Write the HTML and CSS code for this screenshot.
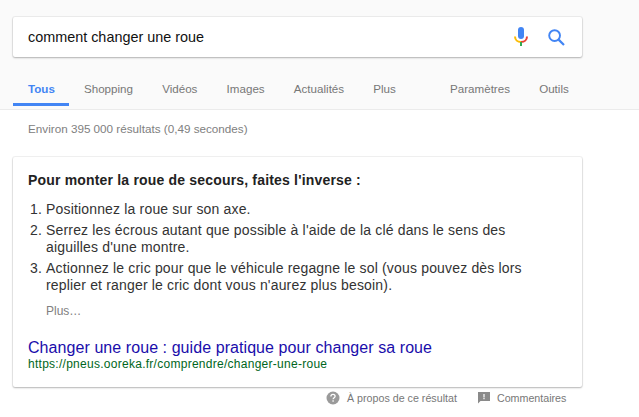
FILE: index.html
```html
<!DOCTYPE html>
<html lang="fr">
<head>
<meta charset="utf-8">
<title>comment changer une roue</title>
<link rel="stylesheet" href="styles.css">
</head>
<body>
<header class="top">
  <div class="search">
    <span class="query">comment changer une roue</span>
    <svg class="mic" width="14" height="20" viewBox="0 0 14 20">
      <rect x="4" y="0" width="6" height="12" rx="3" fill="#4285f4"/>
      <path d="M1 9.5C1 13 3.6 15 7 15" fill="none" stroke="#fbbc05" stroke-width="2"/>
      <path d="M13 9.5C13 13 10.4 15 7 15" fill="none" stroke="#ea4335" stroke-width="2"/>
      <rect x="6" y="15" width="2" height="4" fill="#34a853"/>
    </svg>
    <svg class="lens" width="17" height="17" viewBox="0 0 17 17">
      <circle cx="6.6" cy="6.6" r="5.4" fill="none" stroke="#4285f4" stroke-width="1.9"/>
      <path d="M10.6 10.6L16 16" stroke="#4285f4" stroke-width="2.2"/>
    </svg>
  </div>
  <nav class="tabs">
    <a class="tab active">Tous</a>
    <a class="tab">Shopping</a>
    <a class="tab">Vidéos</a>
    <a class="tab">Images</a>
    <a class="tab">Actualités</a>
    <a class="tab">Plus</a>
    <a class="tab tools-start">Paramètres</a>
    <a class="tab">Outils</a>
  </nav>
</header>
<main class="main">
  <p class="stats">Environ 395 000 résultats (0,49 secondes)</p>
  <section class="card">
    <h2 class="heading">Pour monter la roue de secours, faites l'inverse :</h2>
    <ol class="steps">
      <li>Positionnez la roue sur son axe.</li>
      <li>Serrez les écrous autant que possible à l'aide de la clé dans le sens des aiguilles d'une montre.</li>
      <li>Actionnez le cric pour que le véhicule regagne le sol (vous pouvez dès lors replier et ranger le cric dont vous n'aurez plus besoin).</li>
    </ol>
    <div class="more">Plus…</div>
    <a class="title">Changer une roue : guide pratique pour changer sa roue</a>
    <div class="url">https://pneus.ooreka.fr/comprendre/changer-une-roue</div>
  </section>
  <div class="feedback">
    <svg class="fb-icon" width="14" height="14" viewBox="0 0 14 14">
      <circle cx="7" cy="7" r="6.5" fill="#9a9a9a"/>
      <path d="M4.9 5.4C4.9 4.2 5.8 3.4 7 3.4S9.100 4.200 9.100 5.300C9.100 6.700 7.100 6.700 7.100 8.300" fill="none" stroke="#fff" stroke-width="1.300"/>
      <rect x="6.400" y="9.300" width="1.400" height="1.400" fill="#fff"/>
    </svg>
    <span class="fb-about">À propos de ce résultat</span>
    <svg class="fb-icon" width="12" height="12" viewBox="0 0 12 12">
      <path d="M0 0H12V9H2.500L0 11.500Z" fill="#8a8a8a"/>
      <rect x="5.400" y="2" width="1.200" height="3.500" fill="#fff"/>
      <rect x="5.400" y="6" width="1.200" height="1.200" fill="#fff"/>
    </svg>
    <span class="fb-comments">Commentaires</span>
  </div>
</main>
</body>
</html>
```
FILE: styles.css
```css
* { box-sizing: border-box; }
html, body { margin: 0; padding: 0; }
body {
  width: 639px;
  height: 417px;
  overflow: hidden;
  background: #fff;
  font-family: "Liberation Sans", Arial, sans-serif;
  color: #222;
}
.top {
  height: 110px;
  padding: 17px 0 0 13px;
  background: #fafafa;
  border-bottom: 1px solid #ebebeb;
}
.search {
  display: flex;
  align-items: center;
  width: 569px;
  height: 40px;
  padding: 0 17px 0 15px;
  background: #fff;
  border-radius: 2px;
  box-shadow: 0 1px 2px rgba(0,0,0,.25), 0 0 0 1px rgba(0,0,0,.05);
}
.query {
  flex: 1;
  font-size: 14.4px;
  color: #111;
}
.mic { margin-right: 20px; }
.tabs {
  display: flex;
  height: 32px;
  margin-top: 17px;
}
.tab {
  height: 32px;
  padding: 8px 14.6px 0;
  font-size: 11.6px;
  line-height: 14px;
  color: #777;
}
.tab.active {
  width: 56.4px;
  padding-left: 15px;
  color: #4285f4;
  font-weight: bold;
  border-bottom: 3px solid #4285f4;
}
.tools-start { margin-left: 25px; }
.main { padding-left: 13px; }
.stats {
  margin: 0;
  padding: 11px 0 0 15px;
  height: 47px;
  font-size: 11.7px;
  line-height: 15px;
  color: #808080;
}
.card {
  width: 569px;
  height: 230px;
  padding: 14px 15px 0;
  background: #fff;
  border-radius: 2px;
  box-shadow: 0 1px 2px rgba(0,0,0,.25), 0 0 0 1px rgba(0,0,0,.05);
}
.heading {
  margin: 0;
  font-size: 14px;
  line-height: 18px;
  font-weight: bold;
  letter-spacing: .18px;
  color: #222;
}
.steps {
  margin: 12px 0 0;
  padding: 0 20px 0 18px;
  font-size: 14px;
  line-height: 17px;
  letter-spacing: .17px;
  color: #333;
}
.steps li { margin-bottom: 4px; }
.more {
  margin: 10px 0 0 18px;
  font-size: 12px;
  line-height: 15px;
  color: #808080;
}
.title {
  display: block;
  margin-top: 19px;
  font-size: 16px;
  line-height: 19px;
  letter-spacing: .07px;
  color: #1a0dab;
}
.url {
  font-size: 12px;
  line-height: 14px;
  letter-spacing: .27px;
  color: #006621;
}
.feedback {
  display: flex;
  align-items: center;
  height: 20px;
  margin-top: 1px;
  padding-left: 313px;
  font-size: 10.7px;
  color: #777;
}
.fb-about { margin-left: 7px; margin-right: 21px; }
.fb-comments { margin-left: 7px; }
```
